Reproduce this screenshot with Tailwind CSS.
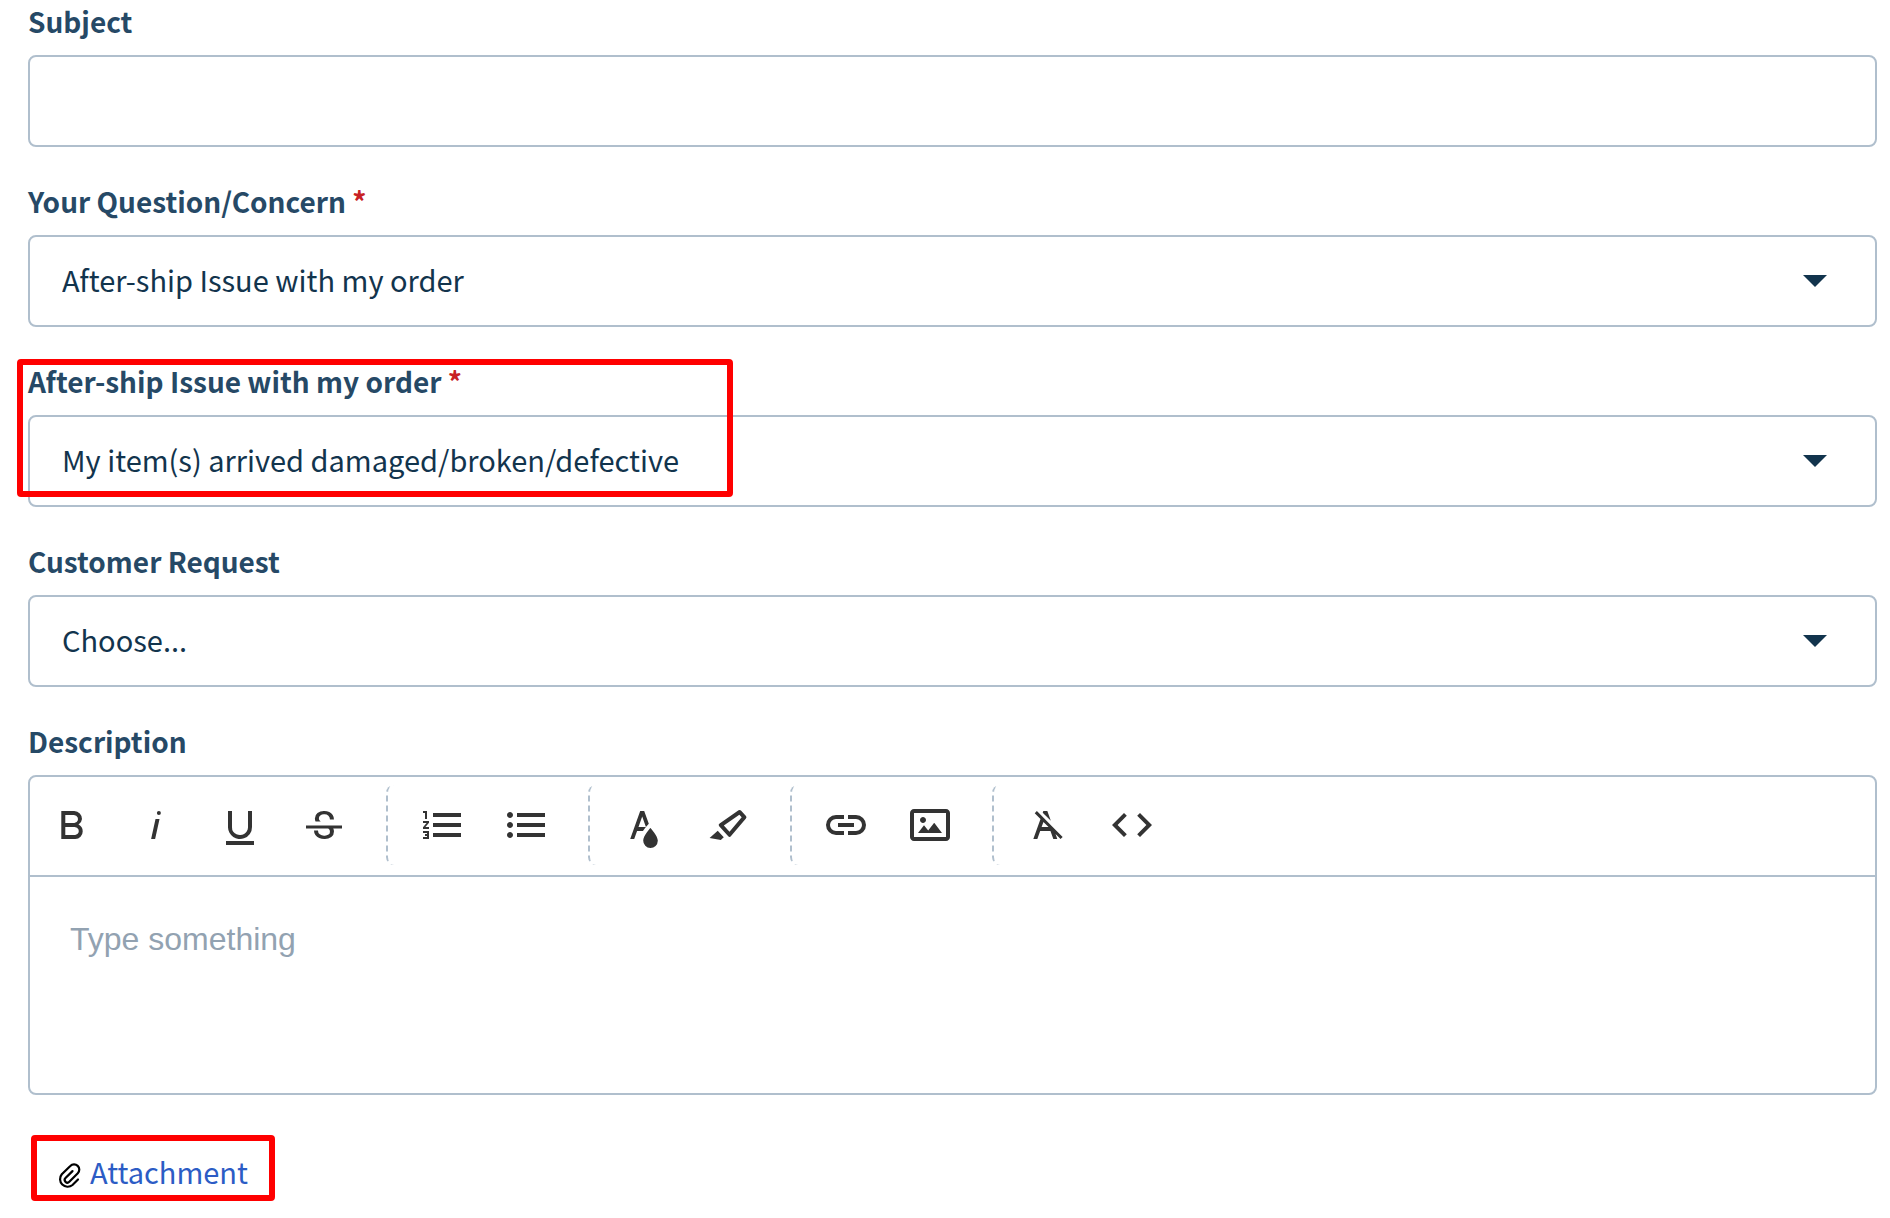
<!DOCTYPE html>
<html lang="en">
<head>
    <meta charset="UTF-8">
    <meta name="viewport" content="width=device-width, initial-scale=1.0">
    <title>Submit a ticket</title>
    <script src="https://cdn.jsdelivr.net/npm/@tailwindcss/browser@4"></script>
</head>
<body class="bg-white font-['Noto_Sans_CJK_SC',sans-serif] text-[29px] text-[#12344d]">
<form class="pt-px pl-7 pr-[13px]">
    <div class="flex flex-col gap-[34px]">
        <div>
            <label for="subject" class="block h-10 leading-10 mb-3.5 text-[28px] font-bold text-[#264966]">Subject</label>
            <input id="subject" type="text" class="block w-full h-[92px] px-8 border-2 border-[#b0bfcd] rounded-lg bg-white">
        </div>

        <div>
            <label for="question" class="block h-10 leading-10 mb-3.5 text-[28px] font-bold text-[#264966]">Your Question/Concern <span class="text-[#c82124]">*</span></label>
            <div class="relative">
                <select id="question" class="appearance-none block w-full h-[92px] pl-8 pr-20 pb-0.5 border-2 border-[#b0bfcd] rounded-lg bg-white">
                    <option>After-ship Issue with my order</option>
                </select>
                <svg class="absolute right-[50px] top-10 w-6 h-3 pointer-events-none" viewBox="0 0 24 12" fill="#12344d"><path d="M0 0h24L12 12z"/></svg>
            </div>
        </div>

        <div class="relative">
            <label for="issue" class="block h-10 leading-10 mb-3.5 text-[28px] font-bold text-[#264966]">After-ship Issue with my order <span class="text-[#c82124]">*</span></label>
            <div class="relative">
                <select id="issue" class="appearance-none block w-full h-[92px] pl-8 pr-20 pb-0.5 border-2 border-[#b0bfcd] rounded-lg bg-white">
                    <option>My item(s) arrived damaged/broken/defective</option>
                </select>
                <svg class="absolute right-[50px] top-10 w-6 h-3 pointer-events-none" viewBox="0 0 24 12" fill="#12344d"><path d="M0 0h24L12 12z"/></svg>
            </div>
            <!-- highlight -->
            <div class="absolute -left-[11px] -top-[2px] w-[716px] h-[138px] border-6 border-[#ff0000] rounded-sm pointer-events-none"></div>
        </div>

        <div>
            <label for="request" class="block h-10 leading-10 mb-3.5 text-[28px] font-bold text-[#264966]">Customer Request</label>
            <div class="relative">
                <select id="request" class="appearance-none block w-full h-[92px] pl-8 pr-20 pb-0.5 border-2 border-[#b0bfcd] rounded-lg bg-white">
                    <option>Choose...</option>
                </select>
                <svg class="absolute right-[50px] top-10 w-6 h-3 pointer-events-none" viewBox="0 0 24 12" fill="#12344d"><path d="M0 0h24L12 12z"/></svg>
            </div>
        </div>

        <div>
            <label for="description" class="block h-10 leading-10 mb-3.5 text-[28px] font-bold text-[#264966]">Description</label>
            <div class="border-2 border-[#b0bfcd] rounded-lg">
                <div class="flex items-center gap-5 h-[100px] pb-0.5 border-b-2 border-[#b0bfcd] text-[#333333]">
                    <div class="flex">
                        <button type="button" aria-label="Bold" class="w-[84px] h-20 flex items-center justify-center">
                            <svg class="size-12" viewBox="0 0 24 24" fill="currentColor"><path d="M15.25,11.8h0A3.68,3.68,0,0,0,17,9a3.93,3.93,0,0,0-3.86-4H6.65V19h7a3.74,3.74,0,0,0,3.7-3.78V15.1A3.64,3.64,0,0,0,15.25,11.8ZM8.65,7h4.2a2.09,2.09,0,0,1,2,1.3,2.09,2.09,0,0,1-1.37,2.61,2.23,2.23,0,0,1-.63.09H8.65Zm4.6,10H8.65V13h4.6a2.09,2.09,0,0,1,2,1.3,2.09,2.09,0,0,1-1.37,2.61A2.23,2.23,0,0,1,13.25,17Z"/></svg>
                        </button>
                        <button type="button" aria-label="Italic" class="w-[84px] h-20 flex items-center justify-center">
                            <svg class="size-12" viewBox="0 0 24 24" fill="currentColor"><path d="M11.76,9h2l-2.2,10h-2Zm1.68-4a1,1,0,1,0,1,1,1,1,0,0,0-1-1Z"/></svg>
                        </button>
                        <button type="button" aria-label="Underline" class="w-[84px] h-20 flex items-center justify-center">
                            <svg class="size-12" viewBox="0 0 24 24" fill="currentColor"><path d="M19,20v2H5V20Zm-3-6.785a4,4,0,0,1-5.74,3.4A3.75,3.75,0,0,1,8,13.085V5.005H6v8.21a6,6,0,0,0,8,5.44,5.851,5.851,0,0,0,4-5.65v-8H16ZM16,5v0h2V5ZM8,5H6v0H8Z"/></svg>
                        </button>
                        <button type="button" aria-label="Strikethrough" class="w-[84px] h-20 flex items-center justify-center">
                            <svg class="size-12" viewBox="0 0 24 24" fill="currentColor"><path d="M3,12.20294H21v1.5H16.63422a3.59782,3.59782,0,0,1,.34942,1.5929,3.252,3.252,0,0,1-1.31427,2.6997A5.55082,5.55082,0,0,1,12.20251,19a6.4421,6.4421,0,0,1-2.62335-.539,4.46335,4.46335,0,0,1-1.89264-1.48816,3.668,3.668,0,0,1-.67016-2.15546V14.704h.28723v-.0011h.34149v.0011H9.02v.11334a2.18275,2.18275,0,0,0,.85413,1.83069,3.69,3.69,0,0,0,2.32836.67926,3.38778,3.38778,0,0,0,2.07666-.5462,1.73346,1.73346,0,0,0,.7013-1.46655,1.69749,1.69749,0,0,0-.647-1.43439,3.00525,3.00525,0,0,0-.27491-.17725H3ZM16.34473,7.05981A4.18163,4.18163,0,0,0,14.6236,5.5462,5.627,5.627,0,0,0,12.11072,5,5.16083,5.16083,0,0,0,8.74719,6.06213,3.36315,3.36315,0,0,0,7.44006,8.76855a3.22923,3.22923,0,0,0,.3216,1.42786h2.59668c-.08338-.05365-.18537-.10577-.25269-.16064a1.60652,1.60652,0,0,1-.65283-1.30036,1.79843,1.79843,0,0,1,.68842-1.5108,3.12971,3.12971,0,0,1,1.96948-.55243,3.04779,3.04779,0,0,1,2.106.6687,2.35066,2.35066,0,0,1,.736,1.83258v.11341h2.00317V9.17346A3.90013,3.90013,0,0,0,16.34473,7.05981Z"/></svg>
                        </button>
                    </div>
                    <div class="flex pl-3 border-l-2 border-dashed border-[#b0bfcd] rounded-lg">
                        <button type="button" aria-label="Ordered list" class="w-[84px] h-20 flex items-center justify-center">
                            <svg class="size-12" viewBox="0 0 24 24" fill="currentColor"><path d="M2.5,16h2v.5h-1v1h1V18h-2v1h3V15h-3Zm1-7h1V5h-2V6h1Zm-1,2H4.3L2.5,13.1V14h3V13H3.7l1.8-2.1V10h-3Zm5-5V8h14V6Zm0,12h14V16H7.5Zm0-5h14V11H7.5Z"/></svg>
                        </button>
                        <button type="button" aria-label="Unordered list" class="w-[84px] h-20 flex items-center justify-center">
                            <svg class="size-12" viewBox="0 0 24 24" fill="currentColor"><path d="M4,10.5c-.8,0-1.5.7-1.5,1.5s.7,1.5,1.5,1.5,1.5-.7,1.5-1.5S4.8,10.5,4,10.5Zm0-5c-.8,0-1.5.7-1.5,1.5S3.2,8.5,4,8.5,5.5,7.8,5.5,7,4.8,5.5,4,5.5Zm0,10c-.8,0-1.5.7-1.5,1.5s.7,1.5,1.5,1.5,1.5-.7,1.5-1.5S4.8,15.5,4,15.5ZM7.5,6V8h14V6Zm0,12h14V16H7.5Zm0-5h14V11H7.5Z"/></svg>
                        </button>
                    </div>
                    <div class="flex pl-3 border-l-2 border-dashed border-[#b0bfcd] rounded-lg">
                        <button type="button" aria-label="Text color" class="w-[84px] h-20 flex items-center justify-center">
                            <svg class="size-12" viewBox="0 0 24 24" fill="currentColor"><path d="M15.2,13.494s-3.6,3.9-3.6,6.3a3.65,3.65,0,0,0,7.3.1v-.1C18.9,17.394,15.2,13.494,15.2,13.494Zm-1.47-1.357.669-.724L12.1,5h-2l-5,14h2l1.43-4h2.943A24.426,24.426,0,0,1,13.726,12.137ZM11.1,7.8l1.86,5.2H9.244Z"/></svg>
                        </button>
                        <button type="button" aria-label="Background color" class="w-[84px] h-20 flex items-center justify-center">
                            <svg class="size-12" viewBox="0 0 24 24" fill="currentColor"><path d="M9.91752,12.24082l7.74791-5.39017,1.17942,1.29591-6.094,7.20747L9.91752,12.24082M7.58741,12.652l4.53533,4.98327a.93412.93412,0,0,0,1.39531-.0909L20.96943,8.7314A.90827.90827,0,0,0,20.99075,7.533l-2.513-2.76116a.90827.90827,0,0,0-1.19509-.09132L7.809,11.27135A.93412.93412,0,0,0,7.58741,12.652ZM2.7939,18.52772,8.41126,19.5l1.47913-1.34617-3.02889-3.328Z"/></svg>
                        </button>
                    </div>
                    <div class="flex pl-3 border-l-2 border-dashed border-[#b0bfcd] rounded-lg">
                        <button type="button" aria-label="Insert link" class="w-[84px] h-20 flex items-center justify-center">
                            <svg class="size-12" viewBox="0 0 24 24" fill="currentColor"><path d="M11,17H7A5,5,0,0,1,7,7h4V9H7a3,3,0,0,0,0,6h4ZM17,7H13V9h4a3,3,0,0,1,0,6H13v2h4A5,5,0,0,0,17,7Zm-1,4H8v2h8Z"/></svg>
                        </button>
                        <button type="button" aria-label="Insert image" class="w-[84px] h-20 flex items-center justify-center">
                            <svg class="size-12" viewBox="0 0 24 24" fill="currentColor"><path d="M14.2,11l3.8,5H6l3-3.9l2.1,2.7L14,11H14.2z M8.5,11c0.8,0,1.5-0.7,1.5-1.5S9.3,8,8.5,8S7,8.7,7,9.5C7,10.3,7.7,11,8.5,11z M22,6v12c0,1.1-0.9,2-2,2H4c-1.1,0-2-0.9-2-2V6c0-1.1,0.9-2,2-2h16C21.1,4,22,4.9,22,6z M20,8.8V6H4v12h16V8.8z"/></svg>
                        </button>
                    </div>
                    <div class="flex pl-3 border-l-2 border-dashed border-[#b0bfcd] rounded-lg">
                        <button type="button" aria-label="Clear formatting" class="w-[84px] h-20 flex items-center justify-center">
                            <svg class="size-12" viewBox="0 0 24 24" fill="currentColor"><path d="M11.48,10.09l-1.2-1.21L8.8,7.41,6.43,5,5.37,6.1,8.25,9,4.66,19h2l1.43-4h5.14l1.43,4h2l-.89-2.51L18.27,19l1.07-1.06L14.59,13.2ZM8.8,13l.92-2.56L12.27,13Zm.56-7.15L9.66,5h2l1.75,4.9Z"/></svg>
                        </button>
                        <button type="button" aria-label="Code view" class="w-[84px] h-20 flex items-center justify-center">
                            <svg class="size-12" viewBox="0 0 24 24" fill="currentColor"><path d="M9.4,16.6,4.8,12,9.4,7.4,8,6,2,12l6,6Zm5.2,0L19.2,12,14.6,7.4,16,6l6,6-6,6Z"/></svg>
                        </button>
                    </div>
                </div>
                <textarea id="description" placeholder="Type something" class="block w-full h-[216px] px-10 pt-10 resize-none rounded-b-lg font-['Liberation_Sans',Arial,sans-serif] text-[32px] leading-11 placeholder:text-[#92a2b1]"></textarea>
            </div>
        </div>
    </div>

    <!-- highlight -->
    <div class="mt-10 ml-[3px] w-[244px] h-[66px] pl-[21px] pt-1.5 border-6 border-[#ff0000] rounded-sm flex items-center gap-2">
        <svg class="w-6 h-[26px] mt-2.5 text-black" viewBox="0 0 24 26" fill="none" stroke="currentColor" stroke-width="2.2" stroke-linecap="round"><path d="M20 16.5l-5.5 5.5a7.6 7.6 0 0 1-10.7-10.7l8.5-8.3a5.2 5.2 0 0 1 7.5 7.3l-8.5 8.5a2.6 2.6 0 0 1-3.8-3.7l7-7"/></svg>
        <a href="#" class="leading-10 text-[#2c5cc5]">Attachment</a>
    </div>
</form>
</body>
</html>
